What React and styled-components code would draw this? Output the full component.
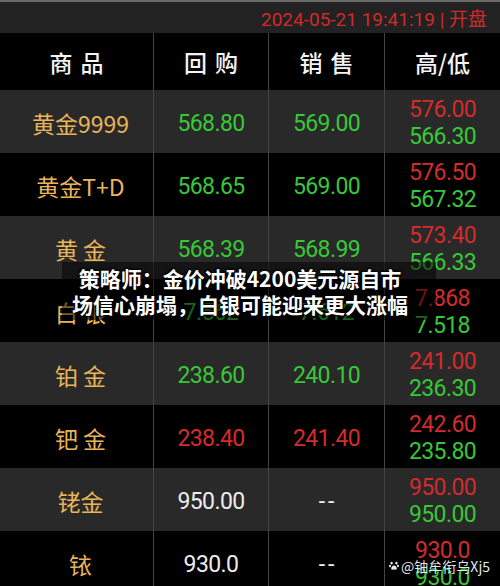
import React from 'react';
import styled, { createGlobalStyle } from 'styled-components';

const Global = createGlobalStyle`
  html, body { margin: 0; padding: 0; background: #000; overflow: hidden; }
  body { width: 500px; height: 586px; }
`;

const COLORS = {
  green: '#37c837',
  red: '#d42b2b',
  white: '#ececec',
  gold: '#eab55a',
};

const Page = styled.div`
  position: relative;
  width: 500px;
  height: 586px;
  overflow: hidden;
  background: #000;
  font-family: Roboto, "Noto Sans CJK SC", sans-serif;
`;

const TopBar = styled.div`
  height: 31px;
  border-top: 2px solid #6a6a6a;
  background: #222222;
  display: flex;
  align-items: center;
  justify-content: flex-end;
  padding-right: 13px;
  color: #d02a2c;
  font-size: 19px;
  font-family: Roboto, "Noto Sans CJK SC", sans-serif;
  white-space: nowrap;
`;

const Grid = styled.div`
  display: grid;
  grid-template-columns: 153px 115px 116px 116px;
  height: ${(p) => p.$h}px;
  background: ${(p) => (p.$alt ? '#292929' : '#000')};
`;

const Cell = styled.div`
  display: flex;
  align-items: center;
  justify-content: center;
  border-left: ${(p) => (p.$first ? 'none' : '1px solid #444')};
  padding-top: ${(p) => p.$pt || 0}px;
  padding-left: ${(p) => p.$pl || 0}px;
  box-sizing: border-box;
  overflow: hidden;
`;

const HeadText = styled.span`
  color: #f4f4f4;
  font-family: "Noto Sans CJK SC", sans-serif;
  font-weight: 500;
  font-size: 23px;
  letter-spacing: ${(p) => (p.$spaced ? '8px' : '0')};
  padding-left: ${(p) => (p.$spaced ? '8px' : '0')};
  white-space: nowrap;
`;

const Name = styled.span`
  color: ${COLORS.gold};
  font-family: "Noto Sans CJK SC", sans-serif;
  font-size: 23px;
  white-space: pre;
`;

const Num = styled.span`
  color: ${(p) => COLORS[p.$c]};
  font-family: Roboto, sans-serif;
  font-size: 23px;
  letter-spacing: ${(p) => (p.$dash ? '3px' : '-0.6px')};
  padding-left: ${(p) => (p.$dash ? '3px' : '0')};
  line-height: 27px;
  white-space: nowrap;
`;

const Stack = styled.div`
  display: flex;
  flex-direction: column;
  align-items: center;
`;

const Overlay = styled.div`
  position: absolute;
  left: 62px;
  top: 262px;
  width: 374px;
  height: 58px;
  background: rgba(0, 0, 0, 0.5);
  box-sizing: border-box;
  padding: 3px 18px 0 0;
  display: flex;
  flex-direction: column;
  align-items: center;
`;

const Headline = styled.span`
  color: #fff;
  font-family: "Noto Sans CJK SC", sans-serif;
  font-weight: 700;
  font-size: 21px;
  line-height: 26px;
  white-space: nowrap;
  text-shadow: 0 0 2px #000, 1px 1px 2px #000, -1px -1px 2px #000;
`;

const Watermark = styled.div`
  position: absolute;
  right: 10px;
  top: 556px;
  display: flex;
  align-items: center;
  gap: 2px;
  color: rgba(255, 255, 255, 0.92);
  font-family: "Noto Sans CJK SC", sans-serif;
  font-size: 14px;
  line-height: 20px;
  text-shadow: 0 0 2px rgba(0, 0, 0, 0.8);
  white-space: nowrap;
`;

const Paw = () => (
  <svg width="10" height="10" viewBox="0 0 10 10">
    <g fill="rgba(255,255,255,0.92)">
      <ellipse cx="2.6" cy="2.2" rx="1.1" ry="1.4" />
      <ellipse cx="7.4" cy="2.2" rx="1.1" ry="1.4" />
      <ellipse cx="1" cy="5" rx="1" ry="1.2" />
      <ellipse cx="9" cy="5" rx="1" ry="1.2" />
      <path d="M5 4.4 C3.2 4.4 2 6.4 2.2 7.8 C2.4 9.2 4 8.6 5 8.6 C6 8.6 7.6 9.2 7.8 7.8 C8 6.4 6.8 4.4 5 4.4 Z" />
    </g>
  </svg>
);

const rows = [
  { name: '黄金9999', buy: ['568.80', 'green'], sell: ['569.00', 'green'], hi: '576.00', lo: '566.30' },
  { name: '黄金T+D', buy: ['568.65', 'green'], sell: ['569.00', 'green'], hi: '576.50', lo: '567.32' },
  { name: '黄 金', buy: ['568.39', 'green'], sell: ['568.99', 'green'], hi: '573.40', lo: '566.33' },
  { name: '白 银', buy: ['7.562', 'green'], sell: ['7.612', 'green'], hi: '7.868', lo: '7.518' },
  { name: '铂 金', buy: ['238.60', 'green'], sell: ['240.10', 'green'], hi: '241.00', lo: '236.30' },
  { name: '钯 金', buy: ['238.40', 'red'], sell: ['241.40', 'red'], hi: '242.60', lo: '235.80' },
  { name: '铑金', buy: ['950.00', 'white'], sell: ['--', 'white'], hi: '950.00', lo: '950.00' },
  { name: '铱', buy: ['930.0', 'white'], sell: ['--', 'white'], hi: '930.0', lo: '930.0' },
];

export default function App() {
  return (
    <Page>
      <Global />
      <TopBar>2024-05-21 19:41:19 | 开盘</TopBar>
      <Grid $h={57}>
        <Cell $first><HeadText $spaced>商品</HeadText></Cell>
        <Cell><HeadText $spaced>回购</HeadText></Cell>
        <Cell><HeadText $spaced>销售</HeadText></Cell>
        <Cell><HeadText>高/低</HeadText></Cell>
      </Grid>
      {rows.map((r, i) => (
        <Grid key={i} $h={63} $alt={i % 2 === 0}>
          <Cell $first $pl={8} $pt={2}><Name>{r.name}</Name></Cell>
          <Cell $pt={3}><Num $c={r.buy[1]}>{r.buy[0]}</Num></Cell>
          <Cell $pt={3}>
            <Num $c={r.sell[1]} $dash={r.sell[0] === '--'}>{r.sell[0]}</Num>
          </Cell>
          <Cell $pt={3}>
            <Stack>
              <Num $c="red">{r.hi}</Num>
              <Num $c="green">{r.lo}</Num>
            </Stack>
          </Cell>
        </Grid>
      ))}
      <Overlay>
        <Headline>策略师：金价冲破4200美元源自市</Headline>
        <Headline>场信心崩塌，白银可能迎来更大涨幅</Headline>
      </Overlay>
      <Watermark>
        <Paw />
        <span>@铀牟衔乌Xj5</span>
      </Watermark>
    </Page>
  );
}
